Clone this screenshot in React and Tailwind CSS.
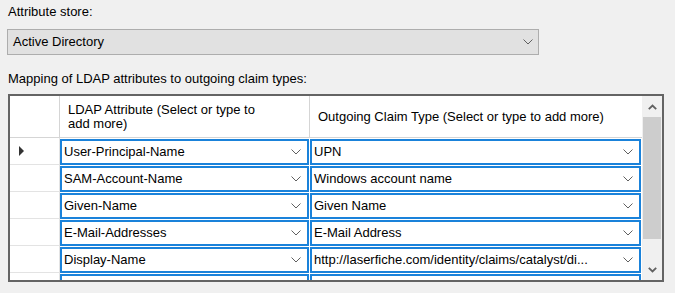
import React from "react";

const rows = [
  { ldap: "User-Principal-Name", claim: "UPN", current: true },
  { ldap: "SAM-Account-Name", claim: "Windows account name" },
  { ldap: "Given-Name", claim: "Given Name" },
  { ldap: "E-Mail-Addresses", claim: "E-Mail Address" },
  { ldap: "Display-Name", claim: "http://laserfiche.com/identity/claims/catalyst/di..." },
  { ldap: "", claim: "" },
];

const Chevron = ({ className = "" }) => (
  <svg width="10" height="6" viewBox="0 0 10 6" className={className}>
    <path d="M0.5 0.5 L5 5 L9.5 0.5" fill="none" stroke="#606060" strokeWidth="1" />
  </svg>
);

const ScrollArrow = ({ up }) => (
  <svg width="9" height="6" viewBox="0 0 9 6">
    <path
      d={up ? "M0.8 5.2 L4.5 1.5 L8.2 5.2" : "M0.8 0.8 L4.5 4.5 L8.2 0.8"}
      fill="none"
      stroke="#606060"
      strokeWidth="1.8"
    />
  </svg>
);

const Cell = ({ text, width }) => (
  <div
    className={`${width} h-[26px] border-2 border-[#1a82da] bg-white flex items-center justify-between pl-[2px] pr-[6px] overflow-hidden`}
  >
    <span className="whitespace-nowrap">{text}</span>
    <Chevron />
  </div>
);

export default function App() {
  return (
    <div className="w-[675px] h-[293px] bg-[#f0f0f0] text-[13px] text-black pl-[7px] pt-[4px] font-['Segoe_UI','Liberation_Sans',Arial,sans-serif] overflow-hidden">
      <div className="h-[16px] leading-[16px] pl-[1px]">Attribute store:</div>

      <div className="mt-[9px] w-[532px] h-[26px] border border-[#adadad] bg-[#e1e1e1] flex items-center justify-between pl-[5px] pr-[5px]">
        <span>Active Directory</span>
        <Chevron />
      </div>

      <div className="mt-[16px] h-[16px] leading-[16px] pl-[1px]">
        Mapping of LDAP attributes to outgoing claim types:
      </div>

      <div className="mt-[7px] ml-[1px] w-[656px] h-[188px] border-2 border-[#646464] bg-white flex overflow-hidden">
        <div className="w-[632px] flex flex-col">
          <div className="h-[42px] flex border-b border-[#d5d5d5] shrink-0">
            <div className="w-[50px] border-r border-[#d5d5d5]" />
            <div className="w-[250px] border-r border-[#d5d5d5] flex items-center pl-[8px] leading-[14px]">
              LDAP Attribute (Select or type to
              <br />
              add more)
            </div>
            <div className="flex-1 flex items-center pl-[8px]">
              Outgoing Claim Type (Select or type to add more)
            </div>
          </div>

          {rows.map((r, i) => (
            <div key={i} className="h-[27px] flex shrink-0">
              <div className="w-[50px] border-r border-b border-[#e3e3e3] flex items-center pl-[9px]">
                {r.current && (
                  <svg width="6" height="10" viewBox="0 0 6 10">
                    <path d="M0 0 L5 5 L0 10 Z" fill="#333333" />
                  </svg>
                )}
              </div>
              <div className="flex-1 flex gap-[1px] pt-[1px]">
                <Cell text={r.ldap} width="w-[249px]" />
                <Cell text={r.claim} width="w-[331px]" />
              </div>
            </div>
          ))}
        </div>

        <div className="w-[20px] bg-[#f0f0f0] flex flex-col">
          <div className="h-[21px] flex items-center justify-center shrink-0">
            <ScrollArrow up />
          </div>
          <div className="h-[122px] mx-[1px] bg-[#cdcdcd] shrink-0" />
          <div className="flex-1" />
          <div className="h-[20px] flex items-center justify-center shrink-0">
            <ScrollArrow />
          </div>
        </div>
      </div>
    </div>
  );
}
